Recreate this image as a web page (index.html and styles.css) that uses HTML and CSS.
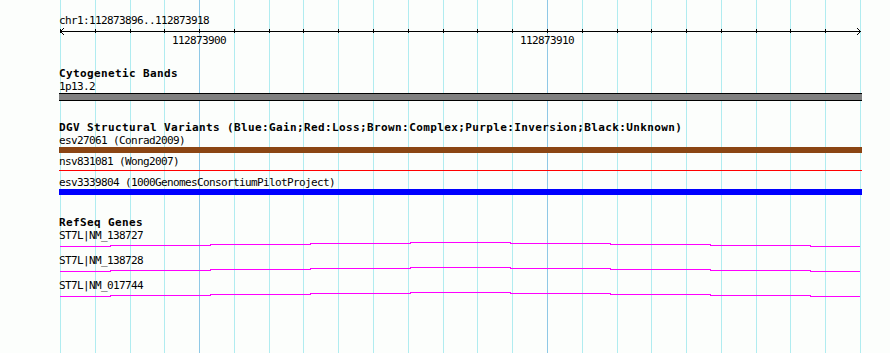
FILE: index.html
```html
<!DOCTYPE html>
<html lang="en">
<head>
  <meta charset="UTF-8" />
  <title>chr1:112873896..112873918</title>
  <meta name="viewport" content="width=device-width, initial-scale=1.0" />
  <link rel="stylesheet" href="styles.css">
</head>
<body>

  <div class="view">
    <!-- one column per base, 23 bases -->
    <div class="grid">
      <div class="col"></div>
      <div class="col"></div>
      <div class="col"></div>
      <div class="col"></div>
      <div class="col major"></div>
      <div class="col"></div>
      <div class="col"></div>
      <div class="col"></div>
      <div class="col"></div>
      <div class="col"></div>
      <div class="col"></div>
      <div class="col"></div>
      <div class="col"></div>
      <div class="col"></div>
      <div class="col major"></div>
      <div class="col"></div>
      <div class="col"></div>
      <div class="col"></div>
      <div class="col"></div>
      <div class="col"></div>
      <div class="col"></div>
      <div class="col"></div>
      <div class="col"></div>
    </div>

    <div class="tracks">
      <div class="ruler">
        <div class="loc">chr1:112873896..112873918</div>
        <svg class="axis" width="890" height="20" viewBox="0 0 890 20" shape-rendering="crispEdges">
          <line x1="60" y1="4.5" x2="861" y2="4.5" />
          <path d="M60.5 2v4M95.5 2v4M130.5 2v4M164.5 2v4M199.5 2v4M234.5 2v4M269.5 2v4M303.5 2v4M338.5 2v4M373.5 2v4M408.5 2v4M443.5 2v4M477.5 2v4M512.5 2v4M547.5 2v4M582.5 2v4M617.5 2v4M651.5 2v4M686.5 2v4M721.5 2v4M756.5 2v4M790.5 2v4M825.5 2v4" />
          <polyline points="64,1 60.5,4.5 64,8" shape-rendering="auto" />
          <polyline points="857,1 860.5,4.5 857,8" shape-rendering="auto" />
          <text x="199" y="16.5" text-anchor="middle">112873900</text>
          <text x="547" y="16.5" text-anchor="middle">112873910</text>
        </svg>
      </div>

      <div class="track">
        <div class="track-title">Cytogenetic Bands</div>
        <div class="feature">
          <div class="label">1p13.2</div>
          <div class="band"></div>
        </div>
      </div>

      <div class="track">
        <div class="track-title">DGV Structural Variants (Blue:Gain;Red:Loss;Brown:Complex;Purple:Inversion;Black:Unknown)</div>
        <div class="feature sv">
          <div class="label">esv27061 (Conrad2009)</div>
          <div class="bar complex"></div>
        </div>
        <div class="feature sv">
          <div class="label">nsv831081 (Wong2007)</div>
          <div class="loss"></div>
        </div>
        <div class="feature sv">
          <div class="label">esv3339804 (1000GenomesConsortiumPilotProject)</div>
          <div class="bar gain"></div>
        </div>
      </div>

      <div class="track genes">
        <div class="track-title">RefSeq Genes</div>
        <div class="feature gene">
          <div class="label">ST7L|NM_138727</div>
          <svg class="intron" width="803" height="13" viewBox="0 0 803 13" shape-rendering="crispEdges">
            <path d="M1 4.5H51V3.5H151V2.5H251V1.5H351V0.5H451V1.5H551V2.5H651V3.5H751V4.5H801" />
          </svg>
        </div>
        <div class="feature gene">
          <div class="label">ST7L|NM_138728</div>
          <svg class="intron" width="803" height="13" viewBox="0 0 803 13" shape-rendering="crispEdges">
            <path d="M1 4.5H51V3.5H151V2.5H251V1.5H351V0.5H451V1.5H551V2.5H651V3.5H751V4.5H801" />
          </svg>
        </div>
        <div class="feature gene">
          <div class="label">ST7L|NM_017744</div>
          <svg class="intron" width="803" height="13" viewBox="0 0 803 13" shape-rendering="crispEdges">
            <path d="M1 4.5H51V3.5H151V2.5H251V1.5H351V0.5H451V1.5H551V2.5H651V3.5H751V4.5H801" />
          </svg>
        </div>
      </div>
    </div>
  </div>

</body>
</html>
```

FILE: styles.css
```css
body {
  margin: 0;
  padding: 0;
  background: #fcfefc;
  font-family: "DejaVu Sans Mono", monospace;
  font-size: 11px;
  letter-spacing: -0.62px;
  color: #000;
}

.view {
  position: relative;
  width: 890px;
  height: 353px;
  overflow: hidden;
}

.grid {
  position: absolute;
  top: 0;
  bottom: 0;
  left: 60px;
  width: 800px;
  display: flex;
  border-right: 1px solid #b0ecf0;
}

.col {
  flex: 1;
  border-left: 1px solid #b0ecf0;
}

.col.major {
  border-left-color: #8ec8e6;
}

.tracks {
  position: relative;
}

.ruler {
  padding-top: 15px;
}

.loc {
  padding-left: 59px;
  line-height: 12px;
}

.axis {
  display: block;
}

.axis line,
.axis path,
.axis polyline {
  stroke: #000;
  stroke-width: 1;
  fill: none;
}

.axis text {
  font-family: "DejaVu Sans Mono", monospace;
  font-size: 11px;
  fill: #000;
}

.track {
  margin-top: 20px;
}

.track.genes {
  margin-top: 18px;
}

.track-title {
  padding-left: 59px;
  line-height: 13px;
  margin-bottom: 1px;
  font-weight: bold;
  letter-spacing: 0.38px;
}

.feature {
  padding-left: 59px;
}

.label {
  line-height: 12px;
  white-space: nowrap;
}

.band {
  width: 803px;
  height: 6px;
  background: #808080;
  border-top: 1px solid #000;
  border-bottom: 1px solid #000;
}

.feature.sv {
  padding-bottom: 3px;
}

.bar {
  width: 803px;
  height: 6px;
}

.bar.complex {
  background: #8b4513;
}

.bar.gain {
  background: #0000ff;
}

.loss {
  width: 803px;
  height: 1px;
  margin: 2px 0 3px;
  background: #ff0000;
}

.intron {
  display: block;
}

.intron path {
  stroke: #ff00ff;
  stroke-width: 1;
  fill: none;
}
```
